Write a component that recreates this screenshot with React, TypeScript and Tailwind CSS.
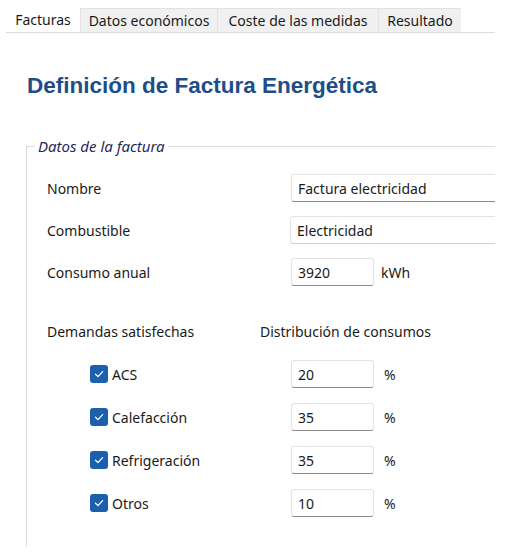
import React from 'react';

const tabs = [
  { label: 'Facturas', width: 'w-[74px]', active: true },
  { label: 'Datos económicos', width: 'w-[137px]', active: false },
  { label: 'Coste de las medidas', width: 'w-[161px]', active: false },
  { label: 'Resultado', width: 'w-[83px]', active: false },
];

const demandas = [
  { label: 'ACS', value: '20' },
  { label: 'Calefacción', value: '35' },
  { label: 'Refrigeración', value: '35' },
  { label: 'Otros', value: '10' },
];

const TextBox = ({ value, className = '' }: { value: string; className?: string }) => (
  <div
    className={`h-[28px] flex items-center bg-white border border-[#e3e3e3] border-b-[#8d8d8d] rounded-[3px] px-[6px] ${className}`}
  >
    {value}
  </div>
);

const CheckBox = () => (
  <span className="w-[18px] h-[18px] rounded-[3px] bg-[#1b5fae] flex items-center justify-center shrink-0">
    <svg width="12" height="12" viewBox="0 0 12 12" fill="none">
      <path d="M2.5 6.2 L5 8.6 L9.6 3.6" stroke="white" strokeWidth="1.3" strokeLinecap="round" strokeLinejoin="round" />
    </svg>
  </span>
);

export default function App() {
  return (
    <div className="w-[505px] h-[559px] bg-white overflow-hidden text-[14px] text-[#1a1a1a] font-['Noto_Sans',sans-serif]">
      <div className="w-[495px] h-full overflow-hidden">
        {/* Tabs */}
        <div className="flex items-end ml-[6px] h-[33px] border-b border-[#dcdcdc]">
          {tabs.map((t) => (
            <div
              key={t.label}
              className={`${t.width} flex items-center justify-center whitespace-nowrap ${
                t.active
                  ? 'h-[26px] bg-white'
                  : 'h-[24px] bg-[#f0f0f0] border-t border-l border-[#e2e2e2]'
              }`}
            >
              {t.label}
            </div>
          ))}
        </div>

        {/* Title */}
        <h1 className="ml-[27px] mt-[40px] text-[22.5px] leading-[26px] font-bold text-[#1d4e89] font-['Liberation_Sans',sans-serif]">
          Definición de Factura Energética
        </h1>

        {/* Group box */}
        <fieldset className="ml-[26px] mt-[38px] w-[500px] h-[410px] border-l border-t border-[#dcdcdc] pl-[20px]">
          <legend className="-ml-[12px] px-[3px] italic text-[15px] text-[#1f2a5c] leading-[18px]">Datos de la factura</legend>

          <div className="flex flex-col gap-[14px] mt-[19px]">
            <div className="flex items-center h-[28px]">
              <span className="w-[244px]">Nombre</span>
              <TextBox value="Factura electricidad" className="w-[220px]" />
            </div>
            <div className="flex items-center h-[28px]">
              <span className="w-[243px]">Combustible</span>
              <TextBox value="Electricidad" className="w-[220px] bg-[#fbfbfb] border-b-[#cfcfcf] px-[4px]" />
            </div>
            <div className="flex items-center h-[28px]">
              <span className="w-[244px]">Consumo anual</span>
              <TextBox value="3920" className="w-[83px]" />
              <span className="ml-[7px]">kWh</span>
            </div>
          </div>

          <div className="flex items-center mt-[35px] h-[20px]">
            <span className="w-[213px]">Demandas satisfechas</span>
            <span>Distribución de consumos</span>
          </div>

          <div className="flex flex-col gap-[15px] mt-[19px]">
            {demandas.map((d) => (
              <div key={d.label} className="flex items-center h-[28px]">
                <div className="w-[244px] flex items-center gap-[4px] pl-[43px]">
                  <CheckBox />
                  <span>{d.label}</span>
                </div>
                <TextBox value={d.value} className="w-[83px]" />
                <span className="ml-[10px]">%</span>
              </div>
            ))}
          </div>
        </fieldset>
      </div>
    </div>
  );
}
